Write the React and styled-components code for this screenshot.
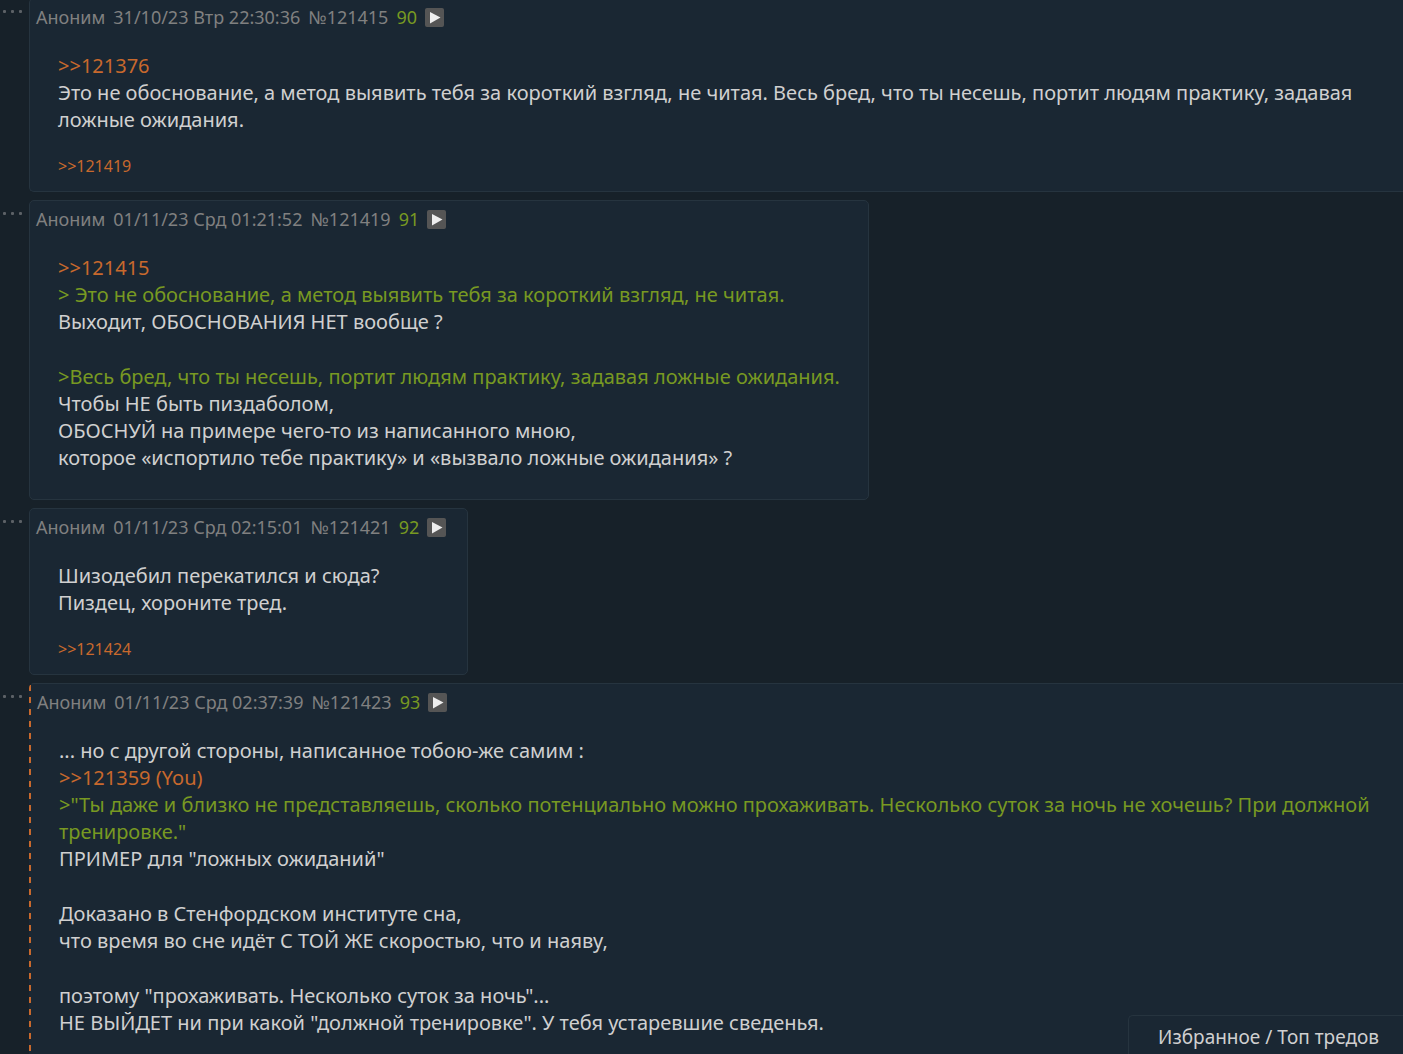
import styled, { createGlobalStyle, css } from "styled-components"

const GlobalStyle = createGlobalStyle`
    * {
        box-sizing: border-box;
    }

    body {
        margin: 0;
        background-color: #172129;
        color: #d0d0d0;
        font-family: "Noto Sans", "Liberation Sans", sans-serif;
        font-size: 20px;
        line-height: 27px;
    }

    button {
        border: none;
        padding: 0;
        background: none;
        cursor: pointer;
    }
`;

const Thread = styled.main`
    height: 100vh;
    overflow: hidden;
    display: flex;
    flex-direction: column;
    gap: 8px;
`;

const Row = styled.div`
    flex: none;
    display: flex;
    align-items: flex-start;

    &:first-child {
        margin-top: -2px;
    }
`;

const MenuButton = styled.button`
    flex: none;
    width: 29px;
    height: 28px;
    display: flex;
    align-items: center;
    padding-left: 2px;
`;

/* long dashes, the native dashed border is too fine at 2px */
const mineBorder = css`
    border-left: 2px solid transparent;
    background-image: repeating-linear-gradient(
        to bottom,
        transparent 0 2px,
        #c8692d 2px 8px,
        transparent 8px 12px
    );
    background-origin: border-box;
    background-size: 2px 100%;
    background-repeat: no-repeat;
`;

const Card = styled.article`
    min-width: 0;
    flex: ${({ $wide }) => ($wide ? "1" : "none")};
    background-color: #1a2733;
    border: 1px solid #26343f;
    border-right-width: ${({ $wide }) => ($wide ? "0" : "1px")};
    border-radius: ${({ $wide }) => ($wide ? "5px 0 0 5px" : "5px")};
    ${({ $mine }) => $mine && mineBorder}
`;

const Header = styled.header`
    display: flex;
    align-items: center;
    gap: 8px;
    padding: 6px 21px 0 6px;
    font-size: 18px;
    line-height: 24px;
    color: #808080;
    white-space: nowrap;
`;

const Count = styled.span`
    color: #789922;
`;

const PlayButton = styled.button`
    width: 19px;
    height: 19px;
    display: grid;
    place-items: center;
    border-radius: 2px;
    background-color: #555;
`;

const Message = styled.div`
    padding: 23px 28px ${({ $tight }) => ($tight ? "0" : "28px")};
`;

const Line = styled.p`
    margin: 0;
    color: ${({ $quote }) => ($quote ? "#789922" : "inherit")};

    &:empty {
        height: 28px;
    }
`;

const Link = styled.a`
    color: #c8692d;
    text-decoration: none;
`;

const Replies = styled.div`
    padding: 22px 28px 14px;
    font-size: 16px;
    line-height: 22px;
`;

const Favorites = styled.button`
    && {
        position: fixed;
        right: 0;
        bottom: 0;
        padding: 8px 24px 3px 29px;
        border: 1px solid #26343f;
        border-width: 1px 0 0 1px;
        border-radius: 5px 0 0 0;
        background-color: #1a2733;
        color: inherit;
        font: inherit;
        font-size: 19px;
    }
`;

const posts = [
    {
        id: 121415,
        date: "31/10/23 Втр 22:30:36",
        count: 90,
        wide: true,
        lines: [
            { link: ">>121376" },
            { text: "Это не обоснование, а метод выявить тебя за короткий взгляд, не читая. Весь бред, что ты несешь, портит людям практику, задавая ложные ожидания." },
        ],
        replies: [121419],
    },
    {
        id: 121419,
        date: "01/11/23 Срд 01:21:52",
        count: 91,
        lines: [
            { link: ">>121415" },
            { quote: true, text: "> Это не обоснование, а метод выявить тебя за короткий взгляд, не читая." },
            { text: "Выходит, ОБОСНОВАНИЯ НЕТ вообще ?" },
            {},
            { quote: true, text: ">Весь бред, что ты несешь, портит людям практику, задавая ложные ожидания." },
            { text: "Чтобы НЕ быть пиздаболом," },
            { text: "ОБОСНУЙ на примере чего-то из написанного мною," },
            { text: "которое «испортило тебе практику» и «вызвало ложные ожидания» ?" },
        ],
    },
    {
        id: 121421,
        date: "01/11/23 Срд 02:15:01",
        count: 92,
        lines: [
            { text: "Шизодебил перекатился и сюда?" },
            { text: "Пиздец, хороните тред." },
        ],
        replies: [121424],
    },
    {
        id: 121423,
        date: "01/11/23 Срд 02:37:39",
        count: 93,
        wide: true,
        mine: true,
        lines: [
            { text: "... но с другой стороны, написанное тобою-же самим :" },
            { link: ">>121359 (You)" },
            { quote: true, text: ">\"Ты даже и близко не представляешь, сколько потенциально можно прохаживать. Несколько суток за ночь не хочешь? При должной тренировке.\"" },
            { text: "ПРИМЕР для \"ложных ожиданий\"" },
            {},
            { text: "Доказано в Стенфордском институте сна," },
            { text: "что время во сне идёт С ТОЙ ЖЕ скоростью, что и наяву," },
            {},
            { text: "поэтому \"прохаживать. Несколько суток за ночь\"..." },
            { text: "НЕ ВЫЙДЕТ ни при какой \"должной тренировке\". У тебя устаревшие сведенья." },
        ],
    },
]

function Post({ post }) {
    return (
        <Row>
            <MenuButton aria-label="Меню поста">
                <svg width="20" height="4" fill="#5c6166">
                    <rect x="1" y="0" width="3" height="3" rx="1" />
                    <rect x="9" y="0" width="3" height="3" rx="1" />
                    <rect x="17" y="0" width="3" height="3" rx="1" />
                </svg>
            </MenuButton>
            <Card id={`post-${post.id}`} $wide={post.wide} $mine={post.mine}>
                <Header>
                    <span>Аноним</span>
                    <time>{post.date}</time>
                    <span>№{post.id}</span>
                    <Count>{post.count}</Count>
                    <PlayButton aria-label="Ответить">
                        <svg width="19" height="19" fill="#eee">
                            <path d="M5 4 L15.5 9.5 L5 15.5 Z" />
                        </svg>
                    </PlayButton>
                </Header>
                <Message $tight={Boolean(post.replies)}>
                    {post.lines.map((line, i) => (
                        <Line key={i} $quote={line.quote}>
                            {line.link ? <Link href={`#post-${line.link.slice(2, 8)}`}>{line.link}</Link> : line.text}
                        </Line>
                    ))}
                </Message>
                {post.replies && (
                    <Replies>
                        {post.replies.map((id) => <Link key={id} href={`#post-${id}`}>{`>>${id}`}</Link>)}
                    </Replies>
                )}
            </Card>
        </Row>
    )
}

export default function App() {
    return (
        <>
            <GlobalStyle />
            <Thread>
                {posts.map((post) => <Post key={post.id} post={post} />)}
            </Thread>
            <Favorites>Избранное / Топ тредов</Favorites>
        </>
    )
}
